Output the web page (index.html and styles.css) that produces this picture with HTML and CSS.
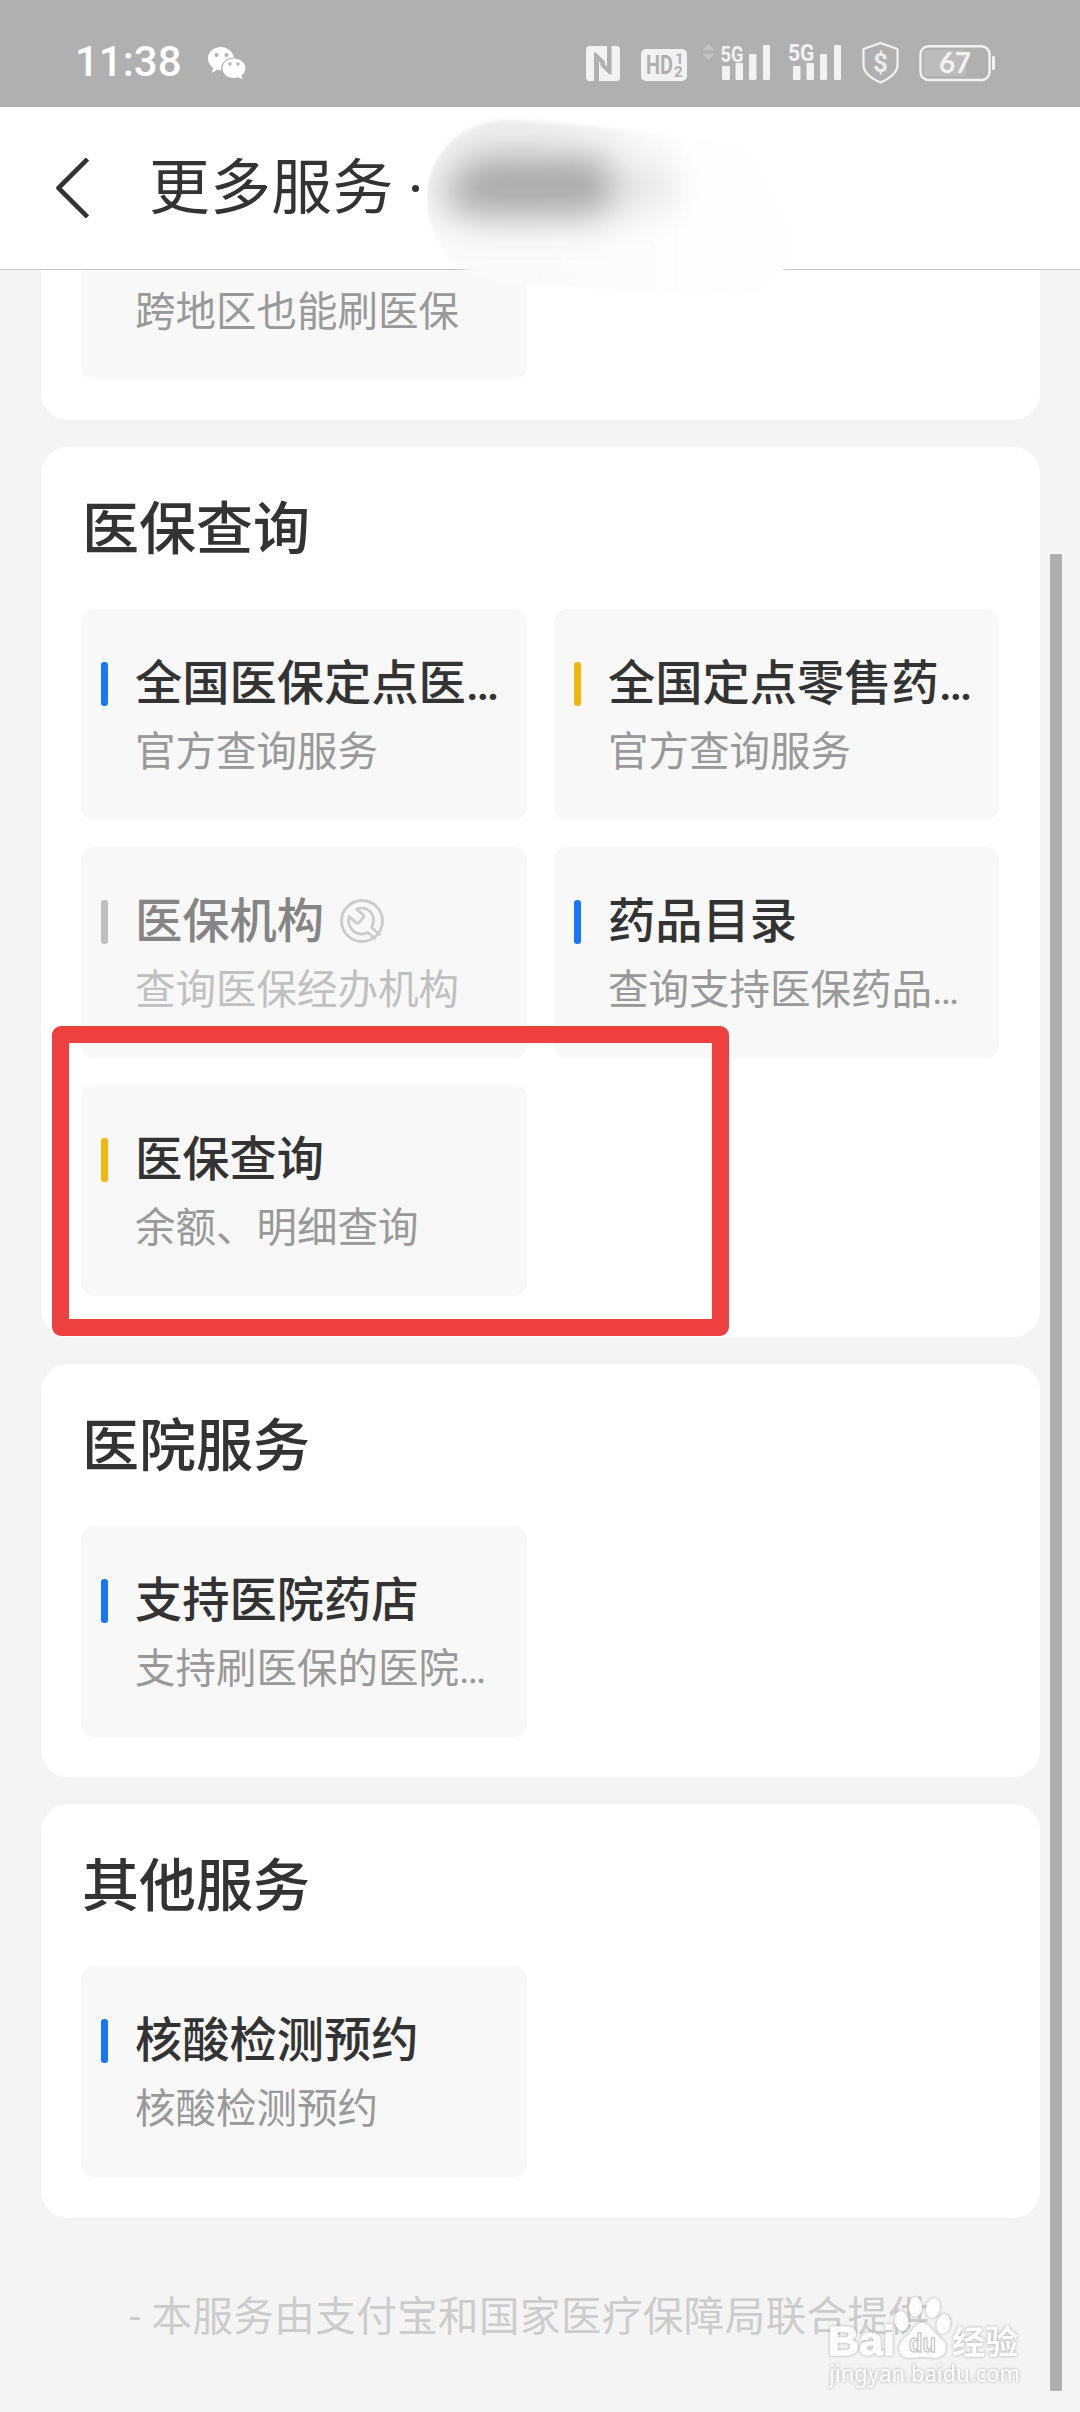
FILE: index.html
```html
<!DOCTYPE html>
<html lang="zh-CN">
<head>
<meta charset="utf-8">
<title>更多服务</title>
<link rel="stylesheet" href="styles.css">
</head>
<body>
<div class="screen">
  <header class="status">
    <span class="clock">11:38</span>
    <svg class="wechat" width="38" height="32" viewBox="0 0 38 32">
      <path fill="#fff" d="M13 0C5.800 0 0 5 0 11.500c0 4 2.200 7.500 5.300 9.600L3.700 25.800l5.600-3c1.300.4 2.400.5 3.900.4C12.500 16 18 10.500 26 10.500 24.500 4.500 19.500 0 13 0z"/>
      <path fill="#fff" d="M25.500 11.500c-6.300 0-11 4.300-11 9.800s4.700 9.700 11 9.700c1.500 0 3-.2 4.400-.7l4.700 1.600-1.200-3.500c2.500-1.800 4.100-4.300 4.100-7.100 0-5.500-5.200-9.800-12-9.800z"/>
      <g fill="#b0b0b0"><circle cx="8.500" cy="8" r="2"/><circle cx="18.500" cy="8" r="2"/><circle cx="22" cy="17" r="1.700"/><circle cx="30" cy="17" r="1.700"/></g>
    </svg>
    <svg class="indicators" width="411" height="44" viewBox="586 40 411 44">
      <rect x="586" y="45" width="34" height="35" rx="3.500" fill="#f2f2f2"/>
      <path d="M594 80V51.500h2l9 9v5.500l-6-5.500V80zM611.500 45v28.500h-2L600.500 65v-5.500l6.500 6V45z" fill="#b0b0b0"/>
      <rect x="641" y="48" width="46" height="32" rx="5" fill="#f2f2f2"/>
      <g fill="#b0b0b0" class="ind-text">
        <text x="646" y="73" font-size="25" textLength="27" lengthAdjust="spacingAndGlyphs">HD</text>
        <text x="675" y="63" font-size="15">1</text>
        <text x="674" y="76" font-size="15">2</text>
      </g>
      <path d="M702.500 49l6-6.300 6 6.300zM702.500 53h12l-6 6.300z" fill="#c3c3c3"/>
      <g fill="#f2f2f2">
        <g class="ind-text">
          <text x="720.500" y="61" font-size="22" textLength="23" lengthAdjust="spacingAndGlyphs">5G</text>
          <text x="788" y="60" font-size="24.500" textLength="26.500" lengthAdjust="spacingAndGlyphs">5G</text>
        </g>
        <rect x="722" y="65" width="8" height="14" rx="1"/><rect x="735.500" y="62" width="7.500" height="17" rx="1"/><rect x="749" y="53" width="7.500" height="26" rx="1"/><rect x="763" y="44" width="7" height="35" rx="1"/>
        <rect x="793" y="65" width="7.500" height="14" rx="1"/><rect x="806.500" y="62" width="7.500" height="17" rx="1"/><rect x="820" y="53" width="7" height="26" rx="1"/><rect x="834" y="44" width="7" height="35" rx="1"/>
        <rect x="992" y="55" width="3" height="14" rx="1"/>
      </g>
      <path d="M880.500 42l17 6v16c0 8-7 13-17 17.500-10-4.500-17-9.500-17-17.500V48z" fill="none" stroke="#f2f2f2" stroke-width="2.200" stroke-linejoin="round"/>
      <text class="ind-text" x="873" y="71" font-size="26" fill="#ebebeb">$</text>
      <rect x="924" y="49" width="42" height="26" rx="3" fill="#bcbcbc"/>
      <rect x="920.500" y="45.200" width="69" height="33.800" rx="8" fill="none" stroke="#f2f2f2" stroke-width="2.400"/>
      <text class="battery-text" x="939" y="72" font-size="28" fill="#f2f2f2" textLength="32">67</text>
    </svg>
  </header>

  <nav class="titlebar">
    <svg class="back" width="36" height="60" viewBox="0 0 36 60"><path d="M33.500 1L4.500 30 33.500 59" fill="none" stroke="#333" stroke-width="4.600" stroke-linejoin="round"/></svg>
    <h1 class="page-title">更多服务</h1>
    <i class="title-dot"></i>
  </nav>

  <main class="content">
    <section class="card card-cut">
      <div class="tiles">
        <div class="tile"><i class="bar blue"></i><div class="label"><h3></h3><p>跨地区也能刷医保</p></div></div>
      </div>
    </section>

    <section class="card">
      <h2>医保查询</h2>
      <div class="tiles">
        <div class="tile"><i class="bar blue"></i><div class="label"><h3>全国医保定点医…</h3><p>官方查询服务</p></div></div>
        <div class="tile"><i class="bar yellow"></i><div class="label"><h3>全国定点零售药…</h3><p>官方查询服务</p></div></div>
        <div class="tile disabled"><i class="bar gray"></i><div class="label"><h3>医保机构<svg class="wrench" width="44" height="44" viewBox="0 0 44 44"><g fill="none" stroke="#ccc" stroke-width="2.800" stroke-linejoin="round" stroke-linecap="round"><circle cx="22" cy="22" r="20.500"/><path d="M39.500 35.500l-6.500-5.700c-1.200-.8-1.500-1.800-.9-3C36.500 18 30 8 20 9.200c-1.500.2-2.600.6-3.500 1.200l6.500 5.100c1.200 1 1.200 2 .4 3l-4 4.700c-1 1.200-2.400 1.300-3.500.4L9.200 17.500C6.500 26 13 35.500 22.500 35c1.500-.1 2.800-.5 4-1 1-.4 1.800-.3 2.500.4l5.500 5.100"/></g></svg></h3><p>查询医保经办机构</p></div></div>
        <div class="tile"><i class="bar blue"></i><div class="label"><h3>药品目录</h3><p>查询支持医保药品…</p></div></div>
        <div class="tile"><i class="bar yellow"></i><div class="label"><h3>医保查询</h3><p>余额、明细查询</p></div></div>
      </div>
    </section>

    <section class="card card-hospital">
      <h2>医院服务</h2>
      <div class="tiles">
        <div class="tile"><i class="bar blue"></i><div class="label"><h3>支持医院药店</h3><p>支持刷医保的医院…</p></div></div>
      </div>
    </section>

    <section class="card">
      <h2>其他服务</h2>
      <div class="tiles">
        <div class="tile"><i class="bar blue"></i><div class="label"><h3>核酸检测预约</h3><p>核酸检测预约</p></div></div>
      </div>
    </section>

    <footer class="provider">- 本服务由支付宝和国家医疗保障局联合提供 -</footer>
  </main>

  <div class="scrollbar"></div>
  <div class="highlight"></div>

  <svg class="smudge" width="400" height="200" viewBox="420 105 400 200">
    <defs>
      <linearGradient id="v" x1="0" y1="118" x2="0" y2="290" gradientUnits="userSpaceOnUse"><stop offset="0" stop-color="#eee"/><stop offset=".25" stop-color="#f4f4f4"/><stop offset=".7" stop-color="#fafafa"/><stop offset="1" stop-color="#f9f9f9"/></linearGradient>
      <linearGradient id="h" x1="530" y1="0" x2="690" y2="0" gradientUnits="userSpaceOnUse"><stop offset="0" stop-color="#fdfdfd" stop-opacity="0"/><stop offset="1" stop-color="#fefefe"/></linearGradient>
      <filter id="edge" x="-10%" y="-10%" width="120%" height="120%"><feGaussianBlur stdDeviation="2"/></filter>
      <filter id="soft" filterUnits="userSpaceOnUse" x="360" y="80" width="420" height="240"><feGaussianBlur stdDeviation="18"/></filter>
      <clipPath id="blob"><path id="shape" d="M427 200C427 152 462 120 510 120C600 124 700 140 745 146L795 236C788 276 770 293 735 296C650 297 580 284 515 284C460 282 427 245 427 200z"/></clipPath>
    </defs>
    <g filter="url(#edge)"><use href="#shape" fill="url(#v)"/><use href="#shape" fill="url(#h)"/></g>
    <g clip-path="url(#blob)"><g filter="url(#soft)"><path d="M438 192L476 156H602L622 186 602 216H464z" fill="#a8a8a8"/><ellipse cx="645" cy="186" rx="30" ry="26" fill="#e6e6e6"/></g></g>
  </svg>

  <svg class="watermark" width="210" height="110" viewBox="820 2290 210 110">
    <g fill="#fff">
      <text class="wm-bold" x="828" y="2355" font-size="41" textLength="67" lengthAdjust="spacingAndGlyphs">Bai</text>
      <ellipse cx="901.500" cy="2321" rx="7" ry="10" transform="rotate(-12 901.500 2321)"/>
      <ellipse cx="915.500" cy="2307" rx="6.800" ry="10"/>
      <ellipse cx="933" cy="2308" rx="7" ry="10" transform="rotate(12 933 2308)"/>
      <ellipse cx="943.500" cy="2324" rx="7" ry="10" transform="rotate(10 943.500 2324)"/>
      <path d="M922 2323c-7 0-9 7-14 12-5 4-9 8-9 14 0 6 5 9 10 9 5 0 8-1 13-1s8 1 13 1c6 0 11-4 11-10 0-7-5-9-9-13-5-5-8-12-15-12z"/>
      <text class="wm-cjk" x="952" y="2354" font-size="33" textLength="66" lengthAdjust="spacingAndGlyphs">经验</text>
      <text class="wm-url" x="829" y="2382" font-size="24" textLength="191" lengthAdjust="spacingAndGlyphs">jingyan.baidu.com</text>
    </g>
    <text class="wm-du" x="909" y="2352" font-size="25" textLength="27" lengthAdjust="spacingAndGlyphs">du</text>
  </svg>
</div>
</body>
</html>
```
FILE: styles.css
```css
* { box-sizing: border-box; }

body {
  margin: 0;
  background: #f4f4f4;
  font-family: Roboto, "Noto Sans CJK SC", sans-serif;
  color: #333;
}

h1, h2, h3, p { margin: 0; }

.screen {
  position: relative;
  width: 1080px;
  height: 2412px;
  overflow: hidden;
  display: flex;
  flex-direction: column;
}

.status {
  height: 107px;
  flex: none;
  padding: 18px 83px 0 75px;
  background: #b0b0b0;
  display: flex;
  align-items: center;
}

.clock {
  width: 133px;
  color: #fff;
  font-size: 42px;
  font-weight: 500;
  line-height: 50px;
  margin-top: -1px;
}

.indicators { margin-left: auto; }
.ind-text { font-family: Roboto, sans-serif; font-weight: 700; }
.battery-text { font-family: Lato, sans-serif; font-weight: 700; }

.titlebar {
  height: 163px;
  flex: none;
  padding-left: 54px;
  background: #fff;
  border-bottom: 1px solid #c4c4c4;
  display: flex;
  align-items: center;
}

.page-title {
  margin-left: 59px;
  padding-top: 2px;
  font-size: 60.750px;
  font-weight: 400;
  line-height: 80px;
  letter-spacing: 0.400px;
}

.title-dot {
  width: 7px;
  height: 7px;
  margin-left: 18px;
  border-radius: 50%;
  background: #333;
}

.content {
  flex: 1;
  min-height: 0;
  overflow: hidden;
  padding: 0 40px 0 41px;
  display: flex;
  flex-direction: column;
  gap: 27px;
}

.card {
  flex: none;
  padding: 0 41px 41px 40px;
  background: #fff;
  border-radius: 27px;
}

.card-cut {
  height: 150px;
  border-radius: 0 0 27px 27px;
  display: flex;
  flex-direction: column;
  justify-content: flex-end;
  overflow: hidden;
}

.card-hospital { padding-bottom: 40px; }

.card h2 {
  height: 162px;
  padding: 43px 0 0 1px;
  font-size: 57px;
  font-weight: 500;
  line-height: 80px;
}

.tiles {
  display: grid;
  grid-template-columns: 446px 445px;
  gap: 27px;
}

.tile {
  height: 211px;
  padding: 43px 0 0 20px;
  background: #f8f8f8;
  border-radius: 13px;
  display: flex;
  gap: 27px;
  white-space: nowrap;
}

.bar {
  width: 7px;
  height: 44px;
  flex: none;
  margin-top: 10px;
  border-radius: 3px;
}

.blue { background: #1777ff; }
.yellow { background: #f4b60c; }
.gray { background: #bfbfbf; }

.tile h3 {
  height: 61px;
  font-size: 47.250px;
  font-weight: 500;
  line-height: 65px;
  display: flex;
}

.tile p {
  margin-top: 9px;
  font-size: 40.500px;
  line-height: 60px;
  color: #999;
}

.card-cut .tile p { margin-top: 10px; }

.disabled h3 { color: #858585; }
.disabled p { color: #c0c0c0; }
.wrench { margin: 9px 0 0 16px; }

.provider {
  margin: 42px -10px 0;
  font-size: 40.500px;
  line-height: 60px;
  letter-spacing: 0.450px;
  color: #ccc;
  text-align: center;
  white-space: nowrap;
}

.scrollbar {
  position: absolute;
  left: 1050px;
  top: 554px;
  width: 12px;
  height: 1837px;
  border-radius: 1px;
  background: #afafaf;
}

.highlight {
  position: absolute;
  left: 52px;
  top: 1026px;
  width: 677px;
  height: 310px;
  border: 17px solid #ee4040;
  border-radius: 9px;
}

.smudge { position: absolute; left: 420px; top: 105px; }

.watermark {
  position: absolute;
  left: 820px;
  top: 2290px;
  opacity: .88;
  filter: drop-shadow(0 0 1.500px #999);
}

.wm-bold { font-family: "Liberation Sans", sans-serif; font-weight: 700; stroke: #fff; stroke-width: 1.500px; }
.wm-cjk { font-family: "Noto Sans CJK SC", sans-serif; font-weight: 700; }
.wm-url { font-family: "Noto Sans", sans-serif; font-weight: 500; }
.wm-du { font-family: "Liberation Sans", sans-serif; font-weight: 700; fill: #fff; stroke: #c4c4c4; stroke-width: 1.500px; }
```
